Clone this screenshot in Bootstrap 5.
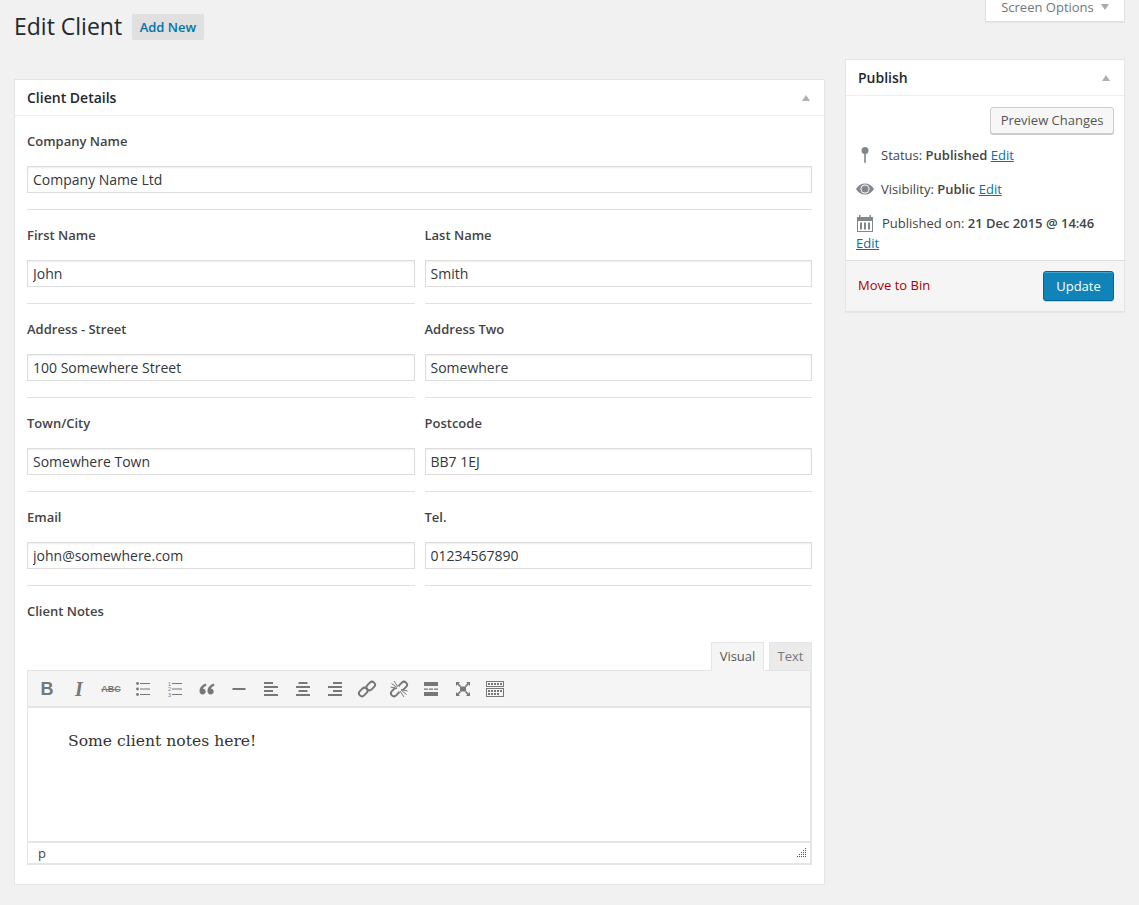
<!DOCTYPE html>
<html lang="en">
<head>
  <meta charset="UTF-8" />
  <meta name="viewport" content="width=device-width, initial-scale=1.0"/>
  <title>Edit Client</title>
  <link href="https://cdn.jsdelivr.net/npm/bootstrap@5.3.0/dist/css/bootstrap.min.css" rel="stylesheet"/>
  <style>
    body {
      background: #f1f1f1;
      color: #444;
      font-family: "Open Sans", sans-serif;
      font-size: 13px;
      line-height: 18px;
    }
    a { color: #0073aa; }
    .page { padding: 0 14px; gap: 20px; }
    .main-col { width: 811px; padding-top: 14px; }
    .side-col { width: 280px; }
    .page-title { height: 26px; margin-bottom: 39px; gap: 10px; }
    .page-title h1 { font-size: 23px; font-weight: 400; color: #23282d; margin: 0 0 2px; line-height: 24px; }
    .add-new { background: #e0e0e0; color: #0073aa; font-weight: 600; padding: 0 7.5px; line-height: 26px; height: 26px; border-radius: 2px; text-decoration: none; }
    .screen-tab { width: 140px; height: 22px; margin-bottom: 37px; padding-bottom: 8px; line-height: 14px; background: #fff; color: #72777c; border: 1px solid #e1e1e1; border-top: 0; border-bottom-color: #ddd; box-shadow: 0 1px 1px rgba(0,0,0,.04); gap: 7px; }
    .tri-down { width: 0; height: 0; border: 4.5px solid transparent; border-top: 6px solid #aaa; border-bottom: 0; }
    .tri-up { width: 0; height: 0; border: 4.5px solid transparent; border-bottom: 6px solid #b0b0b0; border-top: 0; }
    .card { border: 1px solid #e5e5e5; border-radius: 0; box-shadow: 0 1px 1px rgba(0,0,0,.04); }
    .card-header { background: #fff; border-bottom: 1px solid #eee; border-radius: 0 !important; height: 36px; padding: 0 14px 0 12px; font-size: 14px; font-weight: 600; color: #23282d; }
    .details-body { padding: 0 12px 19px; }
    .field-row { --bs-gutter-x: 10px; }
    .field { padding-top: 16px; }
    .field label { display: block; font-weight: 600; color: #444; margin-bottom: 16px; }
    .field .form-control { height: 27px; border: 1px solid #ddd; border-radius: 0; padding: 0 5px; font-size: 14px; color: #32373c; box-shadow: inset 0 1px 2px rgba(0,0,0,.07); }
    .field-rule { height: 1px; background: #e1e1e1; margin-top: 16px; }
    .notes-label { padding-top: 16px; font-weight: 600; margin-bottom: 22px; }
    .editor-tabs { height: 29px; gap: 5px; margin-bottom: -1px; position: relative; }
    .editor-tab { width: 53px; height: 29px; border: 1px solid #e5e5e5; background: #f5f5f5; color: #555; text-align: center; line-height: 27px; }
    .editor-tab.active { border-bottom-color: #f5f5f5; }
    .editor-tab.off { width: 43px; background: #ebebeb; color: #777; }
    .editor { border: 1px solid #e5e5e5; border-width: 1px 2px 2px 1px; }
    .toolbar { height: 37px; background: #f5f5f5; border-bottom: 2px solid #e5e5e5; padding-left: 3px; }
    .tool { width: 32px; height: 36px; color: #777; line-height: 1; }
    .tool svg { display: block; }
    .tool-b { font: 700 18px "Liberation Sans", sans-serif; }
    .tool-i { font: italic 700 20px "Liberation Serif", serif; }
    .tool-abc { font: 700 9px "Liberation Sans", sans-serif; text-decoration: line-through; }
    .editor-text { height: 135px; background: #fff; padding: 20px 40px; font-family: "DejaVu Serif", serif; font-size: 15.6px; line-height: 26px; color: #333; border-bottom: 2px solid #e5e5e5; }
    .status-bar { height: 20px; background: #fff; padding: 0 3px 0 10px; color: #444; }
    .publish-body { padding: 11px 10px 0 10px; }
    .btn-preview { background: #f7f7f7; border: 1px solid #ccc; border-radius: 3px; box-shadow: 0 1px 0 #ccc; color: #555; font-size: 13px; height: 27px; line-height: 25px; padding: 0 9.5px; }
    .misc { height: 34px; gap: 7px; color: #444; }
    .misc b { font-weight: 600; }
    .misc svg { flex: none; }
    .pub-edit { display: block; margin-bottom: 8px; margin-top: -6px; line-height: 18px; }
    .publish-foot { height: 51px; background: #f5f5f5; border-top: 1px solid #ddd; padding: 0 10px 0 12px; }
    .move-bin { color: #a00; text-decoration: none; margin-bottom: 2px; }
    .btn-update { background: #1083b8; border: 1px solid #006799; border-radius: 3px; color: #fff; font-size: 13px; height: 30px; width: 71px; padding: 1px 0 0; box-shadow: inset 0 1px 0 rgba(120,200,230,.5), 0 1px 0 rgba(0,0,0,.15); }
  </style>
</head>
<body>
  <div class="page d-flex align-items-start">
    <div class="main-col">
      <div class="page-title d-flex align-items-center">
        <h1>Edit Client</h1>
        <a href="#" class="add-new">Add New</a>
      </div>

      <div class="card">
        <div class="card-header d-flex align-items-center justify-content-between">
          <span>Client Details</span>
          <span class="tri-up"></span>
        </div>
        <div class="details-body">
          <div class="row field-row">
            <div class="col-12 field">
              <label for="company">Company Name</label>
              <input id="company" class="form-control" value="Company Name Ltd">
              <div class="field-rule"></div>
            </div>
          </div>
          <div class="row field-row">
            <div class="col-6 field">
              <label>First Name</label>
              <input class="form-control" value="John">
              <div class="field-rule"></div>
            </div>
            <div class="col-6 field">
              <label>Last Name</label>
              <input class="form-control" value="Smith">
              <div class="field-rule"></div>
            </div>
          </div>
          <div class="row field-row">
            <div class="col-6 field">
              <label>Address - Street</label>
              <input class="form-control" value="100 Somewhere Street">
              <div class="field-rule"></div>
            </div>
            <div class="col-6 field">
              <label>Address Two</label>
              <input class="form-control" value="Somewhere">
              <div class="field-rule"></div>
            </div>
          </div>
          <div class="row field-row">
            <div class="col-6 field">
              <label>Town/City</label>
              <input class="form-control" value="Somewhere Town">
              <div class="field-rule"></div>
            </div>
            <div class="col-6 field">
              <label>Postcode</label>
              <input class="form-control" value="BB7 1EJ">
              <div class="field-rule"></div>
            </div>
          </div>
          <div class="row field-row">
            <div class="col-6 field">
              <label>Email</label>
              <input class="form-control" value="john@somewhere.com">
              <div class="field-rule"></div>
            </div>
            <div class="col-6 field">
              <label>Tel.</label>
              <input class="form-control" value="01234567890">
              <div class="field-rule"></div>
            </div>
          </div>

          <div class="notes-label">Client Notes</div>
          <div class="editor-tabs d-flex justify-content-end">
            <div class="editor-tab active">Visual</div>
            <div class="editor-tab off">Text</div>
          </div>
          <div class="editor">
            <div class="toolbar d-flex">
              <div class="tool tool-b d-flex align-items-center justify-content-center">B</div>
              <div class="tool tool-i d-flex align-items-center justify-content-center">I</div>
              <div class="tool tool-abc d-flex align-items-center justify-content-center">ABC</div>
              <div class="tool d-flex align-items-center justify-content-center">
                <svg width="20" height="20" viewBox="0 0 20 20" fill="#777"><circle cx="4.5" cy="4.5" r="1.4"/><circle cx="4.5" cy="10" r="1.4"/><circle cx="4.5" cy="15.5" r="1.4"/><rect x="7" y="4" width="10" height="1"/><rect x="7" y="9.5" width="10" height="1"/><rect x="7" y="15" width="10" height="1"/></svg>
              </div>
              <div class="tool d-flex align-items-center justify-content-center">
                <svg width="20" height="20" viewBox="0 0 20 20" fill="#777"><text x="3" y="6.5" font-size="5.5" font-family="Liberation Sans">1</text><text x="3" y="12" font-size="5.5" font-family="Liberation Sans">2</text><text x="3" y="17.5" font-size="5.5" font-family="Liberation Sans">3</text><rect x="7" y="4" width="10" height="1"/><rect x="7" y="9.5" width="10" height="1"/><rect x="7" y="15" width="10" height="1"/></svg>
              </div>
              <div class="tool d-flex align-items-center justify-content-center">
                <svg width="20" height="20" viewBox="0 0 20 20" fill="#777"><path d="M9 4.500C5.500 5.500 2.500 8.500 2.500 12c0 2 1.200 3.500 3.200 3.500 1.700 0 3-1.300 3-2.900 0-1.600-1.100-2.700-2.700-2.800C6.300 8.500 7.600 7.500 9.400 6.800zM17 4.500c-3.500 1-6.500 4-6.500 7.500 0 2 1.200 3.500 3.200 3.500 1.700 0 3-1.300 3-2.900 0-1.600-1.100-2.700-2.700-2.800.3-1.300 1.600-2.300 3.400-3z"/></svg>
              </div>
              <div class="tool d-flex align-items-center justify-content-center">
                <svg width="20" height="20" viewBox="0 0 20 20" fill="#777"><rect x="3.500" y="9" width="13" height="2"/></svg>
              </div>
              <div class="tool d-flex align-items-center justify-content-center">
                <svg width="20" height="20" viewBox="0 0 20 20" fill="#777"><rect x="3" y="3" width="9" height="2"/><rect x="3" y="7" width="14" height="2"/><rect x="3" y="11" width="9" height="2"/><rect x="3" y="15" width="14" height="2"/></svg>
              </div>
              <div class="tool d-flex align-items-center justify-content-center">
                <svg width="20" height="20" viewBox="0 0 20 20" fill="#777"><rect x="5.500" y="3" width="9" height="2"/><rect x="3" y="7" width="14" height="2"/><rect x="5.500" y="11" width="9" height="2"/><rect x="3" y="15" width="14" height="2"/></svg>
              </div>
              <div class="tool d-flex align-items-center justify-content-center">
                <svg width="20" height="20" viewBox="0 0 20 20" fill="#777"><rect x="8" y="3" width="9" height="2"/><rect x="3" y="7" width="14" height="2"/><rect x="8" y="11" width="9" height="2"/><rect x="3" y="15" width="14" height="2"/></svg>
              </div>
              <div class="tool d-flex align-items-center justify-content-center">
                <svg width="20" height="20" viewBox="0 0 20 20" fill="none" stroke="#777" stroke-width="2"><rect x="1.500" y="10" width="9.500" height="6" rx="3" transform="rotate(-45 6.250 13)"/><rect x="9" y="4" width="9.500" height="6" rx="3" transform="rotate(-45 13.750 7)"/></svg>
              </div>
              <div class="tool d-flex align-items-center justify-content-center">
                <svg width="20" height="20" viewBox="0 0 20 20" fill="none" stroke="#777" stroke-width="2"><rect x="1.500" y="10" width="9.500" height="6" rx="3" transform="rotate(-45 6.250 13)"/><rect x="9" y="4" width="9.500" height="6" rx="3" transform="rotate(-45 13.750 7)"/><path stroke="#f5f5f5" stroke-width="3.500" d="M1 1l18 18"/><path stroke-width="1" d="M2.500 4.500 8 8.500M5 2l4 6M1.500 8 8 9.500M12 11l5.500 4.500M11 12l4 6M12 10.500l6.500 1.500"/></svg>
              </div>
              <div class="tool d-flex align-items-center justify-content-center">
                <svg width="20" height="20" viewBox="0 0 20 20" fill="#777"><rect x="3" y="3" width="14" height="4"/><rect x="3" y="9.500" width="4" height="1.300"/><rect x="8" y="9.500" width="4" height="1.300"/><rect x="13" y="9.500" width="4" height="1.300"/><rect x="3" y="13" width="14" height="4"/></svg>
              </div>
              <div class="tool d-flex align-items-center justify-content-center">
                <svg width="20" height="20" viewBox="0 0 20 20" fill="#777"><rect x="7" y="7.500" width="6" height="5"/><path d="M3 3h4L5.600 4.400 8 6.800 6.800 8 4.400 5.600 3 7zM17 3v4l-1.400-1.400L13.200 8 12 6.800l2.400-2.400L13 3zM3 17v-4l1.400 1.400L6.800 12 8 13.200l-2.400 2.400L7 17zM17 17h-4l1.400-1.400L12 13.200l1.200-1.200 2.400 2.400L17 13z"/></svg>
              </div>
              <div class="tool d-flex align-items-center justify-content-center">
                <svg width="20" height="20" viewBox="0 0 20 20" fill="none" stroke="#777"><rect x="1.500" y="2.500" width="17" height="5"/><rect x="1.500" y="9.500" width="17" height="8"/><path stroke-width="2" stroke-dasharray="2 1" d="M3 5h14M3 12h14M3 15h11"/></svg>
              </div>
            </div>
            <div class="editor-text">Some client notes here!</div>
            <div class="status-bar d-flex align-items-center justify-content-between">
              <span>p</span>
              <svg width="10" height="10" viewBox="0 0 10 10" fill="#555"><rect x="8" y="0" width="1" height="1"/><rect x="8" y="2" width="1" height="1"/><rect x="6" y="2" width="1" height="1"/><rect x="8" y="4" width="1" height="1"/><rect x="6" y="4" width="1" height="1"/><rect x="4" y="4" width="1" height="1"/><rect x="8" y="6" width="1" height="1"/><rect x="6" y="6" width="1" height="1"/><rect x="4" y="6" width="1" height="1"/><rect x="2" y="6" width="1" height="1"/><rect x="8" y="8" width="1" height="1"/><rect x="6" y="8" width="1" height="1"/><rect x="4" y="8" width="1" height="1"/><rect x="2" y="8" width="1" height="1"/><rect x="0" y="8" width="1" height="1"/></svg>
            </div>
          </div>
        </div>
      </div>
    </div>

    <div class="side-col">
      <div class="d-flex justify-content-end">
        <div class="screen-tab d-flex align-items-center justify-content-center">
          <span>Screen Options</span>
          <span class="tri-down"></span>
        </div>
      </div>
      <div class="card">
        <div class="card-header d-flex align-items-center justify-content-between">
          <span>Publish</span>
          <span class="tri-up"></span>
        </div>
        <div class="publish-body">
          <div class="d-flex justify-content-end mb-1">
            <button class="btn btn-preview">Preview Changes</button>
          </div>
          <div class="misc d-flex align-items-center mt-1">
            <svg width="18" height="18" viewBox="0 0 18 18" fill="#82878c"><circle cx="9" cy="4.500" r="3.500"/><rect x="8.200" y="7" width="1.600" height="10" rx="0.800"/></svg>
            <span>Status: <b>Published</b> <a href="#">Edit</a></span>
          </div>
          <div class="misc d-flex align-items-center">
            <svg width="18" height="18" viewBox="0 0 18 18" fill="#82878c"><path d="M0 9c2-3.500 5.200-5.500 9-5.500s7 2 9 5.500c-2 3.500-5.200 5.500-9 5.500S2 12.500 0 9z"/><circle cx="9" cy="9" r="4.500" fill="#fff"/><circle cx="9" cy="9" r="3.500"/></svg>
            <span>Visibility: <b>Public</b> <a href="#">Edit</a></span>
          </div>
          <div class="misc d-flex align-items-center">
            <svg width="19" height="18" viewBox="0 0 19 18" fill="#82878c"><path d="M1 3h2V1h1.500v2h9V1H15v2h2v15H1zm1 4v10h14V7z" fill-rule="evenodd"/><rect x="4" y="8.500" width="2" height="7"/><rect x="8" y="8.500" width="2" height="7"/><rect x="12" y="8.500" width="2" height="7"/></svg>
            <span>Published on: <b>21 Dec 2015 @ 14:46</b></span>
          </div>
          <a href="#" class="pub-edit">Edit</a>
        </div>
        <div class="publish-foot d-flex align-items-center justify-content-between">
          <a href="#" class="move-bin">Move to Bin</a>
          <button class="btn btn-update">Update</button>
        </div>
      </div>
    </div>
  </div>
</body>
</html>
